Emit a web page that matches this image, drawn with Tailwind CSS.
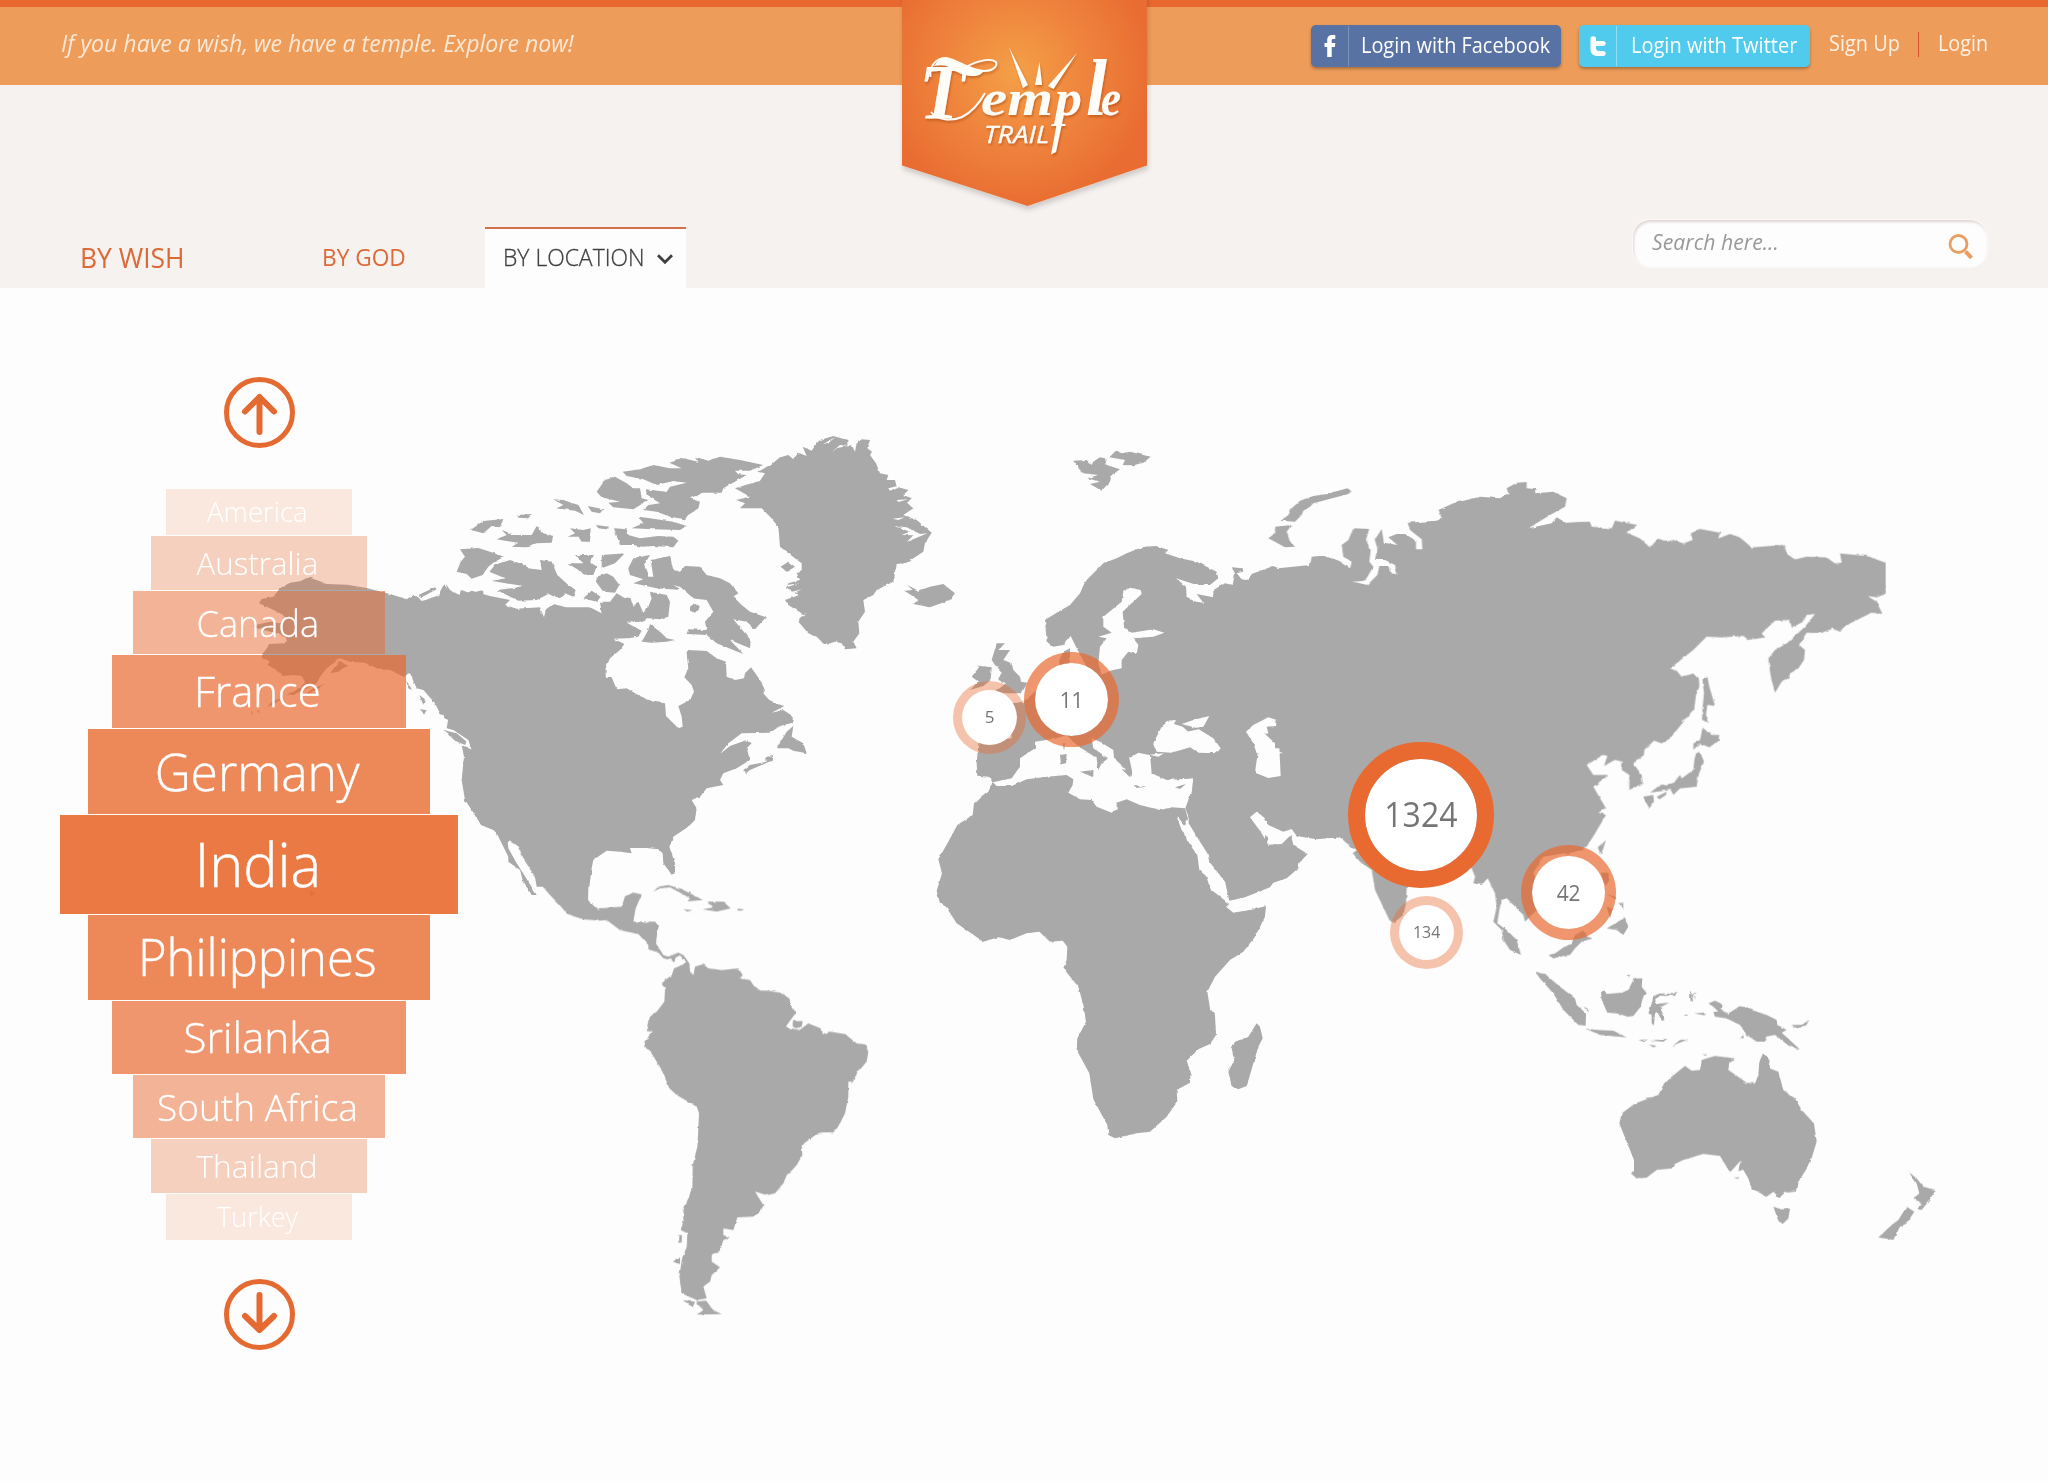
<!DOCTYPE html>
<html lang="en">
<head>
<meta charset="utf-8">
<title>Temple Trail</title>
<script src="https://cdn.jsdelivr.net/npm/@tailwindcss/browser@4"></script>
</head>
<body class="bg-[#fdfdfd] font-['Open_Sans',sans-serif] whitespace-nowrap w-[2048px] h-[1481px] overflow-hidden flex flex-col">

<header class="relative h-[288px] bg-[#f6f2ef] flex flex-col shrink-0">
  <div class="h-[85px] bg-[#ed9c5a] border-t-[7px] border-[#e96830] flex justify-between pl-[61px] pr-[60px]">
    <p class="italic text-[23px] leading-[31px] mt-[21px] text-[#fde8d6] origin-left scale-x-[1.003]">If you have a wish, we have a temple. Explore now!</p>
    <div class="flex items-start">
      <a class="mt-[18px] w-[250px] h-[42px] rounded-[5px] bg-[#5872a3] shadow-[0_2px_3px_rgba(90,60,30,.45)] flex text-white">
        <span class="w-[38px] border-r border-[#7f93b9] my-[1px] flex justify-center items-center">
          <svg class="w-[12px] h-[22px]" viewBox="0 0 12 22"><path fill="#fff" d="M3.200 22V12H0.500V8H3.200V5.600C3.200 1.800 4.900 0 8.300 0H11.300V3.900H9.300C8 3.900 7.700 4.500 7.700 5.700V8H11.300L10.900 12H7.700V22Z"/></svg>
        </span>
        <span class="pl-[12px] text-[21px] leading-[41px]"><span class="inline-block origin-left scale-x-[.948]">Login with Facebook</span></span>
      </a>
      <a class="ml-[18px] mt-[18px] w-[231px] h-[42px] rounded-[5px] bg-[#50cbee] shadow-[0_2px_3px_rgba(90,60,30,.45)] flex text-white">
        <span class="w-[38px] border-r border-[#8fdff5] my-[1px] flex justify-center items-center">
          <svg class="w-[16px] h-[20px]" viewBox="0 0 16 20"><path fill="#fff" d="M0.500 2.500C0.500 -0.500 6 -0.500 6 2.500V5H13C16.500 5 16.500 10 13 10H6V12C6 14 7 15 9 15H13C16.500 15 16.500 20 13 20H8C3 20 0.500 17.500 0.500 13Z"/></svg>
        </span>
        <span class="pl-[14px] text-[21px] leading-[41px]"><span class="inline-block origin-left scale-x-[.953]">Login with Twitter</span></span>
      </a>
      <nav class="flex items-start mt-[21px] ml-[19px] text-[21px] leading-[30px] text-[#fdf1e4]">
        <a class="w-[71px]"><span class="inline-block origin-left scale-x-[.95]">Sign Up</span></a>
        <span class="ml-[18px] mr-[19px] mt-[4px] w-px h-[25px] bg-[#d6512c]"></span>
        <a class="w-[50px]"><span class="inline-block origin-left scale-x-[.94]">Login</span></a>
      </nav>
    </div>
  </div>

  <div class="flex-1 flex justify-between items-end pr-[60px]">
    <nav class="flex items-end text-[#dc6936]">
      <a class="ml-[80px] w-[106px] text-[27px] leading-[40px] pb-[10px]"><span class="inline-block origin-left scale-x-[.98]">BY WISH</span></a>
      <a class="ml-[136px] w-[84px] text-[24px] leading-[40px] pb-[11px]"><span class="inline-block origin-left scale-x-[.945]">BY GOD</span></a>
      <a class="ml-[79px] w-[201px] h-[61px] bg-[#fdfdfd] border-t-2 border-[#d2714b] flex items-start pl-[18px] text-[#3f3f3f]">
        <span class="text-[24.500px] leading-[36px] pt-[10px] font-light w-[143px]"><span class="inline-block origin-left scale-x-[.935] [-webkit-text-stroke:.3px]">BY LOCATION</span></span>
        <svg class="ml-[10px] mt-[24px] w-[18px] h-[12px]" viewBox="0 0 18 12"><path d="M2 2.200L9 9.200L16 2.200" fill="none" stroke="#3f3f3f" stroke-width="2.800"/></svg>
      </a>
    </nav>
    <div class="w-[356px] h-[49px] mb-[20px] rounded-[18px] bg-[#fdfdfd] border border-[#fbf8f7] shadow-[inset_1px_2px_3px_#dfd3d3] flex justify-between pl-[19px] pr-[14px]">
      <span class="italic text-[22px] leading-[43px] text-[#999] origin-left scale-x-[.965]">Search here...</span>
      <svg class="mt-[13px] w-[25px] h-[27px]" viewBox="0 0 25 27"><circle cx="10.500" cy="11" r="8.500" fill="none" stroke="#e8a062" stroke-width="2.800"/><path d="M17.500 18.500L23.500 24.800" stroke="#e8a062" stroke-width="4"/></svg>
    </div>
  </div>

  <svg class="absolute left-[892px] top-0 w-[266px] h-[220px]" viewBox="892 0 266 220">
    <defs>
      <radialGradient id="glow" gradientUnits="userSpaceOnUse" cx="1016" cy="72" r="135"><stop offset="0" stop-color="#f4a047"/><stop offset=".5" stop-color="#ef853d"/><stop offset="1" stop-color="#e96d32"/></radialGradient>
      <filter id="soft" x="-10%" y="-10%" width="120%" height="125%"><feDropShadow dx="1" dy="4" stdDeviation="2.500" flood-color="#000" flood-opacity=".16"/></filter>
      <filter id="lift"><feDropShadow dx="1" dy="2" stdDeviation="1.300" flood-color="#9a3c10" flood-opacity=".45"/></filter>
    </defs>
    <path d="M902 -10H1147V165.500L1027.500 206L902 165.500Z" fill="url(#glow)" filter="url(#soft)"/>
    <g fill="#fffdf8" filter="url(#lift)">
      <!-- sun rays and flourishes -->
      <path d="M1009 47L1028 85L1023 88ZM1039.500 62L1042 85H1035ZM1077 53L1053.500 89L1048 86Z"/>
      <path d="M930.500 77C929 66 936 58 946 58C958 60 972 71 984 71C993 71 998 66 996 62C990 57 972 62 962 70" fill="none" stroke="#fffdf8" stroke-width="1.800"/>
      <path d="M940 58C952 57 966 69 984 70C980 80 962 76 954 70C948 66 944 64 934 66Z"/>
      <path d="M931 112C938 121 952 121 962 117C972 112 980 102 985 93" fill="none" stroke="#fffdf8" stroke-width="2"/>
      <path d="M1059 112L1064 114L1056 152L1051 154.500Z"/>
      <g font-family="'Liberation Serif', serif" font-style="italic">
        <text x="919" y="118" font-size="78" textLength="46" lengthAdjust="spacingAndGlyphs" font-weight="700">T</text>
        <g font-weight="700">
          <text x="981" y="115" font-size="50" textLength="72" lengthAdjust="spacingAndGlyphs">em</text>
          <text x="1055" y="115" font-size="50" textLength="27" lengthAdjust="spacingAndGlyphs">p</text>
          <text x="1086" y="115" font-size="80" textLength="21" lengthAdjust="spacingAndGlyphs">l</text>
          <text x="1101" y="115" font-size="50" textLength="20" lengthAdjust="spacingAndGlyphs">e</text>
        </g>
      </g>
      <text x="984" y="142.500" font-family="'Open Sans', sans-serif" font-style="italic" font-size="24" textLength="65" lengthAdjust="spacingAndGlyphs" stroke="#fffdf8" stroke-width=".3">TRAIL</text>
    </g>
  </svg>
</header>

<main class="relative flex-1">
  <svg class="absolute left-0 top-0 w-[2048px] h-[1193px]" viewBox="0 288 2048 1193">
    <defs>
      <filter id="coast" filterUnits="userSpaceOnUse" x="0" y="288" width="2048" height="1193" color-interpolation-filters="sRGB">
        <feTurbulence type="fractalNoise" baseFrequency=".16" numOctaves="2" seed="4" result="n"/>
        <feDisplacementMap in="SourceGraphic" in2="n" scale="2.500" xChannelSelector="R" yChannelSelector="G"/>
      </filter>
    </defs>
    <g fill="#a9a9a9" filter="url(#coast)">
      <!-- Alaska and the Pacific coast -->
      <g transform="translate(40 360) scale(.33333)">
        <path d="M1330 690L1290 700 1265 690 1258 705 1230 690 1218 672 1222 690 1190 708 1145 724 1135 712 1120 704 1100 718 1050 702 980 684 920 674 860 672 840 664 805 652 780 664 750 668 720 685 700 710 665 717 657 730 690 745 720 760 735 775 720 790 690 785 660 792 637 796 650 805 680 812 715 822 740 835 735 850 690 852 670 878 665 890 690 905 682 915 700 925 720 935 728 948 760 945 785 948 795 965 780 985 740 1005 760 1005 800 985 830 970 840 950 860 925 900 895 930 905 975 908 1010 925 1050 930 1090 950 1110 940 1130 985 1150 990 1185 1030 1200 1060 1230 1085 1225 1105 1260 1115 1290 1140 1297 1170 1275 1160 1275 1200 1265 1260 1280 1310 1300 1350 1330 1385Z"/>
        <path d="M870 940L900 902 922 918 890 936ZM1138 1005L1155 1018 1150 1035ZM1142 1048L1160 1050 1152 1064ZM1098 960L1118 992 1105 985ZM1135 705L1185 682 1190 688 1145 712ZM855 972L820 985 790 1008 830 990ZM735 1012L705 1030 680 1040 700 1022ZM650 1050L660 1054 654 1058ZM632 1056L640 1060 634 1062Z"/>
      </g>
      <!-- North America, Arctic islands, Greenland, Iceland -->
      <g transform="translate(440 420) scale(.33333)">
        <path d="M0 515L12 492 30 520 60 525 62 510 70 524 95 512 150 528 210 540 195 555 230 566 300 562 312 592 318 568 340 552 380 562 450 562 485 580 480 545 510 545 530 520 555 535 570 530 580 560 595 545 610 578 625 560 635 535 630 515 680 525 690 545 685 590 660 598 625 595 600 605 560 608 605 632 595 650 565 655 520 656 553 672 540 690 510 715 497 745 497 770 515 772 530 808 560 805 600 828 640 845 675 850 678 888 715 925 728 920 725 890 715 858 750 840 762 815 755 795 733 772 745 745 740 700 745 690 800 693 830 715 858 725 860 770 885 780 912 775 915 760 933 742 960 780 975 810 970 820 992 845 1033 858 995 878 1030 870 1058 888 1058 908 1020 918 990 938 905 940 865 970 840 1002 870 978 920 960 935 970 920 985 930 1020 890 1045 850 1060 840 1080 850 1095 800 1105 780 1130 755 1140 770 1165 765 1200 745 1220 700 1250 688 1280 705 1330 705 1360 695 1364 670 1330 668 1300 655 1288 620 1284 570 1284 575 1300 540 1295 500 1292 460 1320 455 1345 448 1400 290 1400 280 1340 250 1310 230 1275 203 1262 205 1285 230 1330 262 1380 290 1425 275 1425 248 1380 240 1350 205 1325 205 1310 170 1240 160 1230 123 1215 105 1185 75 1140 65 1080 72 1010 65 975 95 990 85 960 40 930 20 925 25 895 0 872Z"/>
        <path d="M10 930L50 940 80 965 75 975 45 962Z
          M60 388L115 384 150 395 192 410 160 428 145 440 128 465 95 476 80 462 50 455 62 425 75 410Z
          M148 455L165 435 210 420 245 432 265 445 305 450 300 420 335 425 352 465 385 495 407 510 400 530 375 520 360 535 325 522 290 540 235 542 170 510 215 505 250 498 155 483 195 475Z
          M170 358L200 345 185 330 225 345 275 345 290 318 310 340 340 348 335 368 290 370 255 382 215 380 235 368 195 362Z
          M92 330L130 303 190 297 180 322 155 318 130 340Z M232 285L275 282 265 295 235 293Z
          M340 238L370 240 415 255 432 285 405 272 350 265 370 255Z M443 258L490 268 480 280 455 275Z M468 315L508 320 500 328 475 325Z
          M383 350L405 340 390 325 430 330 452 325 450 365 425 365 415 350Z
          M470 215L495 180 525 170 560 190 580 205 600 205 605 235 625 240 580 268 520 262 505 248 540 245 485 232Z
          M548 155L600 148 640 135 690 145 725 145 688 128 730 115 775 125 765 110 805 122 840 110 900 120 970 135 930 152 885 152 895 163 920 165 850 205 845 218 790 218 750 235 780 245 775 265 745 285 735 298 690 290 650 275 610 270 625 255 660 250 620 225 618 208 680 215 690 200 740 188 700 183 650 195 610 178 560 168Z
          M575 325L610 310 595 290 630 295 700 305 740 318 720 330 640 328Z
          M522 325L560 328 565 345 600 355 655 348 700 350 715 362 700 382 640 378 605 380 580 375 540 375Z
          M383 430L430 430 405 405 462 405 450 425 470 440 460 465 440 465 415 450Z
          M485 405L555 400 525 430 485 445Z M470 470L500 460 520 470 538 495 525 518 490 515 470 488Z M430 535L455 512 482 530 470 545Z
          M565 445L580 415 630 405 612 435 625 470 640 470 632 420 690 408 700 450 720 455 735 438 780 440 800 465 840 475 870 490 895 520 880 530 905 555 930 575 978 592 945 628 920 605 880 598 932 660 930 685 870 660 910 702 880 690 830 670 800 645 740 642 745 628 800 630 795 605 820 575 800 540 760 535 720 500 700 495 725 510 650 505 580 490 610 478 570 465Z
          M750 560L765 548 780 560 765 578 750 572Z M605 665L625 630 630 612 665 640 680 655 705 660 680 665 635 668Z
          M1010 985L1040 935 1060 918 1055 950 1090 970 1100 1000 1060 992 1045 985Z M910 1050L930 1035 980 1025 978 1012 995 1005 1000 1020 930 1050 915 1062Z"/>
        <path d="M885 205L960 182 975 160 955 155 1000 128 1020 112 1045 105 1060 118 1075 98 1100 108 1088 80 1115 92 1130 70 1140 60 1180 48 1222 60 1222 80 1235 75 1245 95 1250 70 1265 58 1290 60 1282 85 1296 95 1290 105 1308 130 1320 160 1345 165 1340 180 1365 180 1370 200 1405 210 1390 225 1415 235 1400 250 1420 265 1390 285 1430 300 1475 338 1455 370 1450 395 1400 428 1370 432 1360 485 1310 510 1300 525 1270 540 1275 575 1255 605 1258 640 1240 665 1250 685 1215 688 1205 670 1185 665 1155 675 1130 650 1105 640 1075 605 1085 580 1045 555 1035 540 1075 525 1038 505 1045 490 1080 480 1070 460 1085 450 1085 430 1045 400 1020 380 1015 320 990 290 965 265 900 265 915 250 888 240 930 230Z M1022 440L1045 425 1065 440 1040 455Z"/>
        <path d="M1392 512L1418 510 1402 495 1435 512 1470 500 1510 492 1545 520 1530 540 1470 562 1420 552 1435 540 1405 520Z"/>
        <path fill="#fdfdfd" d="M1358 296L1395 292 1375 300ZM1362 318L1400 322 1440 342 1462 340 1400 366 1420 346 1385 345 1410 335ZM1175 96L1200 75 1222 78 1192 84ZM1150 72L1185 52 1165 70ZM1040 495L1078 490 1045 500ZM1040 520L1085 508 1045 528ZM1062 590L1100 580 1070 600ZM1345 205L1385 195 1350 212ZM1370 240L1405 238 1375 246ZM1185 690L1190 660 1196 680Z"/>
      </g>
      <!-- Central and South America -->
      <g transform="translate(600 860) scale(.33333)">
        <path d="M-240 -20L-189 60 -150 105 -117 140 -99 162 -50 178 0 182 20 180 60 210 115 222 145 255 145 268 175 278 190 295 215 300 222 308 228 292 240 286 258 308 245 315 222 325 215 345 195 360 185 372 195 385 193 425 170 455 150 470 142 495 145 515 158 515 133 545 138 565 150 572 185 630 208 685 230 705 290 740 297 760 292 860 278 915 277 985 250 1050 250 1085 242 1110 262 1120 260 1160 245 1200 238 1250 245 1300 290 1320 320 1315 310 1280 330 1265 335 1245 360 1222 335 1205 335 1185 360 1172 370 1140 390 1132 370 1125 370 1105 400 1110 412 1072 460 1070 480 1058 490 1035 465 995 500 1005 525 1000 550 970 560 945 572 935 590 915 607 885 605 855 640 830 665 817 700 817 715 800 735 760 745 710 745 665 757 665 775 635 800 605 805 575 795 553 770 550 735 522 690 515 665 522 662 505 625 490 598 510 575 505 557 500 588 458 575 440 568 415 540 398 500 392 485 392 462 378 450 360 420 355 428 345 415 325 385 328 365 330 325 325 310 312 285 320 280 345 270 335 268 310 250 285 235 278 205 290 190 285 168 250 172 215 177 200 165 185 100 185 107 145 125 103 100 98 75 108 65 140 0 145 -6 150 -36 120 -33 0Z"/>
        <path d="M160 95L175 80 205 75 240 85 290 110 308 120 262 124 270 115 240 98 210 82 180 85ZM322 125L370 125 392 145 350 155 308 148 340 142ZM250 148L278 150 262 155ZM412 146L432 148 425 152 412 152ZM578 483L608 483 605 500 588 505 578 500Z
          M288 1325L318 1322 340 1350 365 1362 290 1364 310 1350 295 1335ZM248 1320L285 1325 278 1342ZM238 1125L246 1125 245 1148 237 1148ZM218 1205L240 1192 240 1212Z"/>
      </g>
      <!-- Europe -->
      <g transform="translate(920 430) scale(.33333)">
        <path d="M460 92L500 90 515 105 520 95 540 82 555 85 560 105 600 118 575 135 570 155 545 182 510 162 540 155 502 145 535 135 490 130 475 115ZM568 82L588 62 605 70 630 65 692 80 670 98 640 106 608 105 615 90Z"/>
        <path d="M375 570L410 548 450 525 480 490 500 450 550 400 590 385 620 370 670 350 710 348 745 360 735 370 780 385 830 395 890 425 895 445 870 465 830 465 768 445 798 470 800 500 825 515 850 518 830 492 880 502 880 480 915 460 938 465 945 430 935 412 968 415 970 425 950 430 965 448 985 450 995 432 1060 408 1075 415 1170 405 1180 380 1210 378 1265 395V1110H805L815 1090 820 1045 740 1050 695 1030 690 975 628 985 640 1000 635 1040 610 1010 582 985 580 960 540 935 515 925 520 955 565 985 545 1000 535 1020 530 985 470 945 440 915 410 925 345 935 345 955 300 985 300 1010 275 1045 218 1057 205 1040 172 1037 170 1000 175 940 275 925 270 860 280 820 310 815 345 785 400 745 418 715 418 690 430 665 450 655 450 690 440 720 500 710 470 655 452 618 430 645 400 650 380 635Z"/>
        <path fill="#fdfdfd" d="M610 485L630 473 662 480 665 492 635 520 608 545 612 590 635 608 700 598 733 608 700 620 640 625 655 645 650 672 625 665 605 690 605 715 570 722 545 735 535 700 540 650 560 625 535 620 575 608 550 590 550 560 605 515ZM640 1042L628 985 655 968 688 975 690 1030 660 1045Z"/>
        <path d="M215 690L230 640 255 640 235 660 270 660 250 690 275 700 280 720 300 740 303 755 322 758 305 790 260 790 225 785 258 760 235 750 245 725 225 705ZM155 740L180 708 215 712 212 750 190 768 150 780 175 755ZM420 975L440 972 438 1000 423 1003ZM428 940L436 940 432 962ZM480 1025L520 1020 520 1042ZM640 1065L680 1070 650 1074ZM765 1072L798 1062 780 1077ZM605 1018L635 1022 630 1042Z"/>
        <path fill="#fdfdfd" d="M700 940L725 890 745 872 768 870 762 882 788 890 805 905 835 897 880 925 902 955 890 970 835 968 810 952 755 968 710 965ZM785 882L820 870 868 858 850 890 825 893ZM688 974L732 970 715 980ZM978 905L1000 885 1045 862 1070 870 1068 888 1040 890 1045 910 1035 912 1065 940 1065 960 1090 970 1070 975 1080 1000 1082 1040 1045 1045 1005 1025 1015 985 1000 940Z"/>
      </g>
      <!-- Africa and Arabia -->
      <g transform="translate(920 760) scale(.33333)">
        <path d="M218 66L230 78 275 78 320 58 380 50 440 45 460 58 458 75 445 98 480 118 515 120 530 140 575 158 590 148 590 128 620 118 660 135 720 150 755 142 795 145 804 176 795 197 768 165 785 210 815 262 832 285 838 330 858 348 872 388 928 432 918 440 940 458 1000 448 1038 438 1035 470 1005 530 970 575 930 600 885 650 862 695 870 745 885 765 888 825 870 852 835 868 800 902 812 935 810 968 770 990 772 1025 740 1070 690 1115 650 1120 585 1135 565 1125 562 1095 520 1018 508 940 470 870 472 835 498 785 490 735 475 680 430 625 440 600 442 560 428 542 390 545 358 515 320 520 270 540 235 532 190 545 110 490 78 440 60 430 50 393 66 340 55 298 85 245 112 195 158 165 162 130 205 95Z"/>
        <path d="M796 145L803 125 818 90 820 30V-20H1260V232L1190 238 1130 228 1115 207 1090 215 1045 195 1030 170 1010 155 990 172 1022 215 1045 254 1085 252 1113 225 1120 255 1163 282 1138 308 1135 325 1100 355 1060 368 1050 382 1005 400 975 412 928 422 915 365 868 305 862 280 840 245 806 190 806 172Z"/>
        <path d="M1010 790L1020 800 1028 835 1015 860 980 978 955 988 935 978 925 935 943 900 935 865 945 845 985 830ZM1037 222L1045 235 1040 250 1034 240Z"/>
        <path fill="#fdfdfd" d="M1015 -35H1078L1082 48 1045 54 1005 38Z"/>
      </g>
      <!-- Siberia, India, Indochina -->
      <g transform="translate(1260 460) scale(.33333)">
        <path d="M200 330L150 318 155 290 190 288 230 300 270 325 275 305 250 290 245 255 265 240 280 205 330 207 345 238 365 207 372 248 412 255 385 232 410 222 435 222 468 242 468 268 487 268 485 238 450 210 443 188 530 182 545 175 535 150 580 130 660 110 720 115 745 100 740 85 770 68 800 66 800 85 830 88 825 100 880 95 920 115 915 140 870 165 805 205 875 190 890 172 920 190 970 186V1170L850 1190 820 1240 850 1300 830 1350 795 1385 790 1365 740 1315 725 1320 718 1350 712 1390 740 1410 770 1440 783 1485 750 1470 730 1440 725 1410 700 1385 710 1340 705 1300 683 1255 665 1275 640 1270 645 1250 635 1225 560 1200 440 1285 438 1330 430 1365 400 1390 388 1380 345 1290 335 1230 300 1205 278 1180 290 1170 260 1150 240 1132 200 1135Z"/>
        <path fill="#fdfdfd" d="M328 205H348L342 232 352 265 345 300 375 300 405 315 412 343 392 340 385 318 358 318 352 345 322 375 280 365 315 362 340 320 328 305 332 270 318 240Z"/>
        <path d="M275 93L262 85 200 102 160 108 120 122 95 145 85 165 62 182 105 185 125 165 130 152 150 140 160 130 265 102ZM45 200L95 195 80 215 90 245 105 260 75 262 25 235 45 220Z"/>
      </g>
      <!-- East Asia -->
      <g transform="translate(1500 460) scale(.33333)">
        <path d="M200 300V188L270 185 275 200 335 205 345 182 412 195 380 218 420 235 450 262 475 235 500 245 520 240 550 250 578 240 572 220 600 207 660 218 655 235 690 222 720 232 755 262 850 255 865 285 885 298 920 290 980 292 1005 310 1025 308 1020 280 1100 288 1157 308 1157 402 1130 412 1102 408 1130 425 1147 462 1115 458 1050 490 1018 515 1000 505 960 520 920 518 897 555 915 570 912 600 895 625 870 640 865 655 845 665 825 698 812 650 805 595 825 570 860 550 915 500 945 462 920 465 910 485 875 502 870 480 825 482 785 520 795 532 745 540 730 528 665 532 620 530 580 570 510 625 530 632 545 650 580 640 597 658 598 680 588 705 583 745 510 835 485 850 462 842 433 870 432 885 400 910 425 945 428 970 388 990 388 945 365 930 368 905 345 900 312 918 322 888 310 885 260 915 280 945 325 945 280 980 318 1045 295 1058 318 1065 285 1120 260 1160 200 1185Z"/>
        <path d="M318 1138L310 1165 302 1183 293 1162ZM607 655L622 650 628 680 645 738 622 735 618 765 628 788 606 780 608 740 612 700ZM608 803L635 825 658 825 655 842 628 862 600 850 580 870 580 850 600 840ZM588 880L600 875 612 905 597 940 590 980 540 985 520 1005 512 990 450 998 480 975 520 970 540 945 545 955 580 930 583 900ZM430 1010L460 1005 462 1025 448 1045 440 1030ZM470 1010L500 995 498 1005 478 1018Z"/>
      </g>
      <!-- South-east Asia and Oceania -->
      <g transform="translate(1500 840) scale(.33333)">
        <path d="M320 265L345 250 375 232 385 260 370 285 350 270ZM355 188L370 190 370 205ZM303 98L322 98 328 120 318 138 308 120ZM318 160L345 170 345 178ZM320 200L338 205 330 235ZM145 345L165 340 190 322 215 310 225 285 250 272 262 290 278 295 245 305 225 325 210 345 180 350 160 355ZM105 395L135 402 180 440 225 475 230 495 258 520 257 557 235 555 190 510 160 460 120 415ZM250 500L262 505 268 518ZM378 408L390 404 388 412ZM255 565L290 570 340 572 380 592 300 585ZM415 600L445 598 430 605ZM450 602L503 596 490 605ZM515 620L540 600 565 598 530 612ZM447 613L470 618 460 622ZM303 455L312 450 320 462 365 458 385 450 402 415 427 415 425 440 440 460 428 475 422 500 400 528 385 530 350 520 322 518 305 480ZM455 490L460 468 480 460 520 462 533 452 525 468 480 467 465 478 470 492 508 488 480 502 497 540 485 542 472 515 465 520 462 555 455 555 455 525 445 520ZM570 450L576 464 588 456 578 468 586 475 577 472 580 485 571 480ZM550 524L565 524 560 528ZM582 520L612 518 615 526ZM625 490L645 482 665 492 662 510 685 520 720 498 800 525 830 540 832 555 860 570 845 578 900 628 870 620 825 585 798 590 795 605 770 605 740 585 720 555 680 535 645 530 640 515 655 515 640 500ZM720 595L732 583 730 595ZM873 555L905 555 928 540 920 555 895 565Z"/>
        <path d="M405 790L365 820 358 850 370 880 388 925 402 960 402 990 393 1000 410 1015 440 1013 470 990 515 985 525 972 550 960 610 942 660 948 690 997 722 962 715 990 730 990 745 1015 755 1045 800 1070 820 1055 838 1073 855 1058 888 1055 892 1030 930 970 950 905 942 850 905 810 885 775 850 750 835 695 810 685 808 660 790 638 778 665 775 705 765 730 740 728 685 690 688 670 705 655 645 648 605 660 600 690 575 692 555 678 515 710 490 735 475 765ZM605 643L622 643 615 648ZM702 1012L720 1012 712 1017ZM820 1100L845 1108 870 1105 865 1135 848 1152 835 1142ZM1225 995L1250 1015 1270 1040 1307 1050 1285 1085 1265 1110 1255 1108 1265 1090 1240 1075 1258 1060 1250 1030ZM1220 1100L1243 1115 1220 1150 1200 1160 1180 1200 1135 1192 1175 1155 1195 1140Z"/>
      </g>
      <path d="M309 890L315 893 311 897ZM305 887L308 888 306 889Z"/>
    </g>
  </svg>

  <aside class="relative flex flex-col items-center w-[398px] ml-[60px] pt-[89px]">
    <button class="w-[71px] h-[71px] mb-[41px]">
      <svg viewBox="0 0 71 71" fill="none" stroke="#e56a32" stroke-linecap="round" stroke-linejoin="round"><circle cx="35.500" cy="35.500" r="33" stroke-width="5"/><path stroke-width="6" d="M35.500 20V55M21 34.500L35.500 20L50 34.500"/></svg>
    </button>
    <ul class="flex flex-col items-center gap-px text-white font-light text-center *:flex *:items-center *:justify-center *:pr-[3px]">
      <li class="w-[186px] h-[46px] bg-[#e96a30]/15 text-[27px]"><span class="scale-x-[1.02]">America</span></li>
      <li class="w-[216px] h-[54px] bg-[#e96a30]/30 text-[31px]"><span class="scale-x-[1.01]">Australia</span></li>
      <li class="w-[252px] h-[63px] bg-[#e96a30]/50 text-[37px]"><span class="scale-x-[.975] [-webkit-text-stroke:.3px]">Canada</span></li>
      <li class="w-[294px] h-[73px] bg-[#e96a30]/70 text-[43px]"><span class="scale-x-[.97] [-webkit-text-stroke:.4px]">France</span></li>
      <li class="w-[342px] h-[85px] bg-[#e96a30]/80 text-[51px]"><span class="scale-x-[.975] [-webkit-text-stroke:.4px]">Germany</span></li>
      <li class="w-[398px] h-[99px] bg-[#e96a30]/90 text-[60px] pb-[2px]"><span class="scale-x-[.96] [-webkit-text-stroke:.5px]">India</span></li>
      <li class="w-[342px] h-[85px] bg-[#e96a30]/80 text-[51px] pb-[2px]"><span class="scale-x-[.96] [-webkit-text-stroke:.4px]">Philippines</span></li>
      <li class="w-[294px] h-[73px] bg-[#e96a30]/70 text-[43px]"><span class="scale-x-[.98] [-webkit-text-stroke:.4px]">Srilanka</span></li>
      <li class="w-[252px] h-[63px] bg-[#e96a30]/50 text-[37px]"><span class="[-webkit-text-stroke:.3px]">South Africa</span></li>
      <li class="w-[216px] h-[54px] bg-[#e96a30]/30 text-[31.500px]"><span class="scale-x-[1.01]">Thailand</span></li>
      <li class="w-[186px] h-[46px] bg-[#e96a30]/15 text-[27px]"><span>Turkey</span></li>
    </ul>
    <button class="w-[71px] h-[71px] mt-[39px]">
      <svg viewBox="0 0 71 71" fill="none" stroke="#e56a32" stroke-linecap="round" stroke-linejoin="round"><circle cx="35.500" cy="35.500" r="33" stroke-width="5"/><path stroke-width="6" d="M35.500 16V51M21 37L35.500 51L50 37"/></svg>
    </button>
  </aside>

  <div class="text-[#757575] *:absolute *:rounded-full *:flex *:items-center *:justify-center *:bg-white *:bg-clip-padding">
    <div class="left-[953px] top-[393px] w-[73px] h-[73px] border-[9px] border-[#e96a30]/40 text-[17px] pb-px">5</div>
    <div class="left-[1024px] top-[364px] w-[95px] h-[95px] border-[11px] border-[#e96a30]/70 text-[22px] pb-px"><span class="scale-x-[.94]">11</span></div>
    <div class="left-[1348px] top-[454px] w-[146px] h-[146px] border-[17px] border-[#e96a30] text-[34px] pb-[2px]"><span class="scale-x-[.94]">1324</span></div>
    <div class="left-[1521px] top-[557px] w-[95px] h-[95px] border-[11px] border-[#e96a30]/70 text-[22px] pb-px"><span class="scale-x-[.95]">42</span></div>
    <div class="left-[1390px] top-[608px] w-[73px] h-[73px] border-[9px] border-[#e96a30]/40 text-[17px] pb-px"><span class="scale-x-[.94]">134</span></div>
  </div>
</main>
</body>
</html>
